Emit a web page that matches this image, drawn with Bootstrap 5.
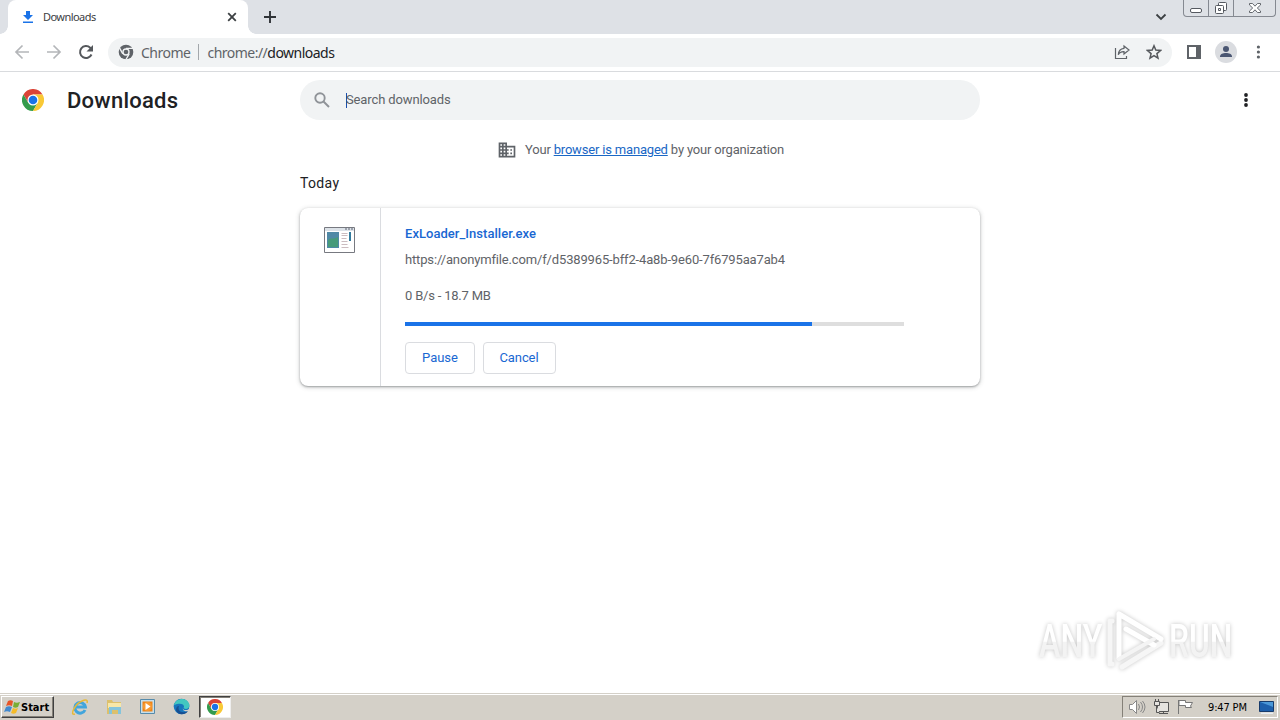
<!DOCTYPE html>
<html lang="en">
<head>
    <meta charset="UTF-8">
    <meta name="viewport" content="width=device-width, initial-scale=1.0">
    <title>Downloads</title>
    <link rel="stylesheet" href="https://cdn.jsdelivr.net/npm/bootstrap@5.3.0/dist/css/bootstrap.min.css">

    <style>
        body {
            height: 720px;
            overflow: hidden;
            font-family: Roboto, "Liberation Sans", sans-serif;
            font-size: 13px;
            line-height: 20px;
            color: #5f6368;
        }
        svg { display: block; flex: none; }

        /* tab strip */
        .tab-strip { height: 34px; background: #dee1e6; padding-left: 8px; }
        .browser-tab {
            width: 240px;
            height: 34px;
            padding: 0 10px 0 14px;
            background: #fff;
            border-radius: 8px 8px 0 0;
            color: #3c4043;
            font: 11px/34px "Noto Sans", sans-serif;
        }
        .browser-tab::before, .browser-tab::after {
            content: "";
            position: absolute;
            bottom: 0;
            width: 8px;
            height: 8px;
        }
        .browser-tab::before { left: -8px; background: radial-gradient(circle at 0 0, #dee1e6 7.5px, #fff 8px); }
        .browser-tab::after { right: -8px; background: radial-gradient(circle at 100% 0, #dee1e6 7.5px, #fff 8px); }
        .tab-title { margin-left: 9px; letter-spacing: -.55px; }
        .window-buttons {
            width: 93px;
            height: 17px;
            margin-right: 4px;
            border: 1px solid #858991;
            border-top: 0;
            border-radius: 0 0 4px 4px;
        }

        /* toolbar */
        .toolbar { height: 38px; border-bottom: 1px solid #d9dbde; padding: 0 14px 1px; }
        .omnibox {
            width: 1064px;
            height: 29px;
            margin-left: 14px;
            padding: 0 10px;
            background: #f1f3f4;
            border-radius: 15px;
            font: 14px/29px "Noto Sans", sans-serif;
        }
        .origin-chip { margin-left: 7px; letter-spacing: -.5px; }
        .chip-line { width: 1px; height: 16px; margin: 0 8px 0 8px; background: #a3a7ab; }
        .address { letter-spacing: -.52px; }
        .address b { font-weight: 400; color: #202124; }
        .profile { margin: 0 17px 0 14px; }

        /* downloads page */
        .page { height: 621px; }
        .page-header { height: 56px; padding-left: 22px; }
        .page-title { width: 256px; padding: 1px 0 0 23px; margin: 0; font-size: 22px; font-weight: 500; line-height: 28px; color: #202124; letter-spacing: .25px; }
        .search-box { width: 680px; height: 40px; padding-left: 12px; background: #f1f3f4; border-radius: 20px; letter-spacing: -.12px; }
        .caret { width: 1px; height: 15px; margin: 0 -1px 0 14px; background: #1a4fae; }
        .managed { height: 44px; padding: 0 0 1px 1px; letter-spacing: -.18px; }
        .managed a { color: #1967c5; }
        .more-menu { margin: 0 26px 0 auto; }
        .downloads-list { width: 680px; }
        .date-label { height: 36px; font-size: 14px; line-height: 22px; color: #202124; letter-spacing: .35px; }
        .download-item {
            height: 178px;
            border-radius: 8px;
            box-shadow: 0 1px 2px rgba(60, 64, 67, .4), 0 1px 4px 1px rgba(60, 64, 67, .18);
        }
        .file-icon { width: 81px; border-right: 1px solid #dadce0; padding: 19px 0 0 24px; }
        .file-info { width: 523px; padding: 16px 0 0 24px; }
        .file-name { color: #1967d2; font-weight: 500; letter-spacing: .04px; }
        .file-url { margin-top: 6px; letter-spacing: -.15px; }
        .file-speed { margin-top: 16px; letter-spacing: -.2px; }
        .progress-track { height: 4px; margin-top: 16px; background: #dedede; }
        .progress-track div { height: 4px; background: #1a73e8; }
        .action-btn {
            height: 32px;
            padding: 0 16px 1px;
            border: 1px solid #dadce0;
            border-radius: 4px;
            color: #1967d2;
            font-size: 13px;
            line-height: 29px;
        }
        .cancel-btn { width: 73px; padding-left: 15px; padding-right: 16px; letter-spacing: -.1px; }
        .watermark { position: absolute; right: 35px; bottom: 12px; filter: drop-shadow(0 0 2px rgba(0, 0, 0, .23)); }

        /* taskbar */
        .taskbar { height: 27px; background: #d4d0c8; border-top: 1px solid #d4d0c8; box-shadow: inset 0 1px #fff; color: #000; }
        .start-btn {
            width: 53px;
            height: 22px;
            margin: 2px 0 0 1px;
            padding: 1px 0 0 2px;
            border: 1px solid;
            border-color: #fff #404040 #404040 #fff;
            box-shadow: inset -1px -1px #848078;
            font: bold 11px/19px "DejaVu Sans Condensed", "DejaVu Sans", sans-serif;
        }
        .task-icons { padding: 4px 0 0 17px; gap: 17px; }
        .task-active {
            width: 32px;
            height: 22px;
            margin: 2px 0 0 9px;
            background: #fff;
            border: 1px solid;
            border-color: #404040 #eee #eee #404040;
            box-shadow: inset 1px 1px #848078;
        }
        .tray {
            width: 156px;
            height: 22px;
            margin: 2px 2px 0 0;
            padding: 0 0 0 5px;
            border: 1px solid;
            border-color: #848078 #fff #fff #848078;
        }
        .clock { margin: 1px 11px 0 14px; font: 11px/20px "DejaVu Sans Condensed", sans-serif; letter-spacing: -.15px; }
    </style>
</head>
<body class="d-flex flex-column bg-white">
    <!-- shared Chrome logo -->
    <svg width="0" height="0" class="position-absolute">
        <symbol id="chrome-logo" viewBox="0 0 48 48">
            <path fill="#db4437" d="M24 12h20.800A24 24 0 0 0 3.200 12l10.400 18z"/>
            <path fill="#349b4c" d="M13.600 30 3.200 12A24 24 0 0 0 24 48l10.400-18z"/>
            <path fill="#f9c936" d="M34.400 30 24 48a24 24 0 0 0 20.800-36H24z"/>
            <circle cx="24" cy="24" r="12" fill="#fff"/>
            <circle cx="24" cy="24" r="9.400" fill="#1a73e8"/>
        </symbol>
    </svg>

    <div class="tab-strip d-flex">
        <div class="browser-tab d-flex align-items-center position-relative">
            <svg width="12" height="12" viewBox="0 0 12 12" fill="#1a73e8"><path d="M4 0h4v4h3L6 9 1 4h3zM1 10.500h10V12H1z"/></svg>
            <span class="tab-title">Downloads</span>
            <svg class="ms-auto" width="12" height="12" viewBox="0 0 12 12" stroke="#3c4043" stroke-width="1.800"><path d="m2.200 2.200 7.600 7.600m0-7.600L2.200 9.800"/></svg>
        </div>
        <svg class="align-self-center ms-3" width="12" height="12" viewBox="0 0 12 12" stroke="#303338" stroke-width="1.900"><path d="M6 0v12M0 6h12"/></svg>
        <svg class="align-self-center ms-auto me-3" width="12" height="12" viewBox="0 0 12 12" fill="none" stroke="#3c4043" stroke-width="1.800"><path d="m1.500 3.500 4.500 4.500 4.500-4.500"/></svg>
        <div class="window-buttons">
            <svg width="91" height="16" viewBox="0 0 91 16" fill="none" stroke="#555960">
                <path stroke="#858991" d="M24.500 0v16M49.500 0v16"/>
                <rect x="6.500" y="8.500" width="11" height="4" rx="1.500" fill="#fff"/>
                <rect x="34.500" y="2.500" width="8" height="8" rx="1" fill="#fff"/>
                <rect x="31.500" y="5.500" width="8" height="8" rx="1" fill="#fff"/><path d="M34.500 8.500h2v2h-2z"/>
                <path fill="#fff" stroke-width=".9" d="M65.500 3.500h3l2.500 2.700 2.500-2.700h3V5L73.300 8l3.200 3v1.500h-3L71 9.800l-2.500 2.700h-3V11l3.200-3-3.200-3z"/>
            </svg>
        </div>
    </div>

    <div class="toolbar d-flex align-items-center">
        <svg width="16" height="16" viewBox="0 0 16 16" fill="none" stroke="#b4b6b9" stroke-width="1.700"><path d="M15 8H2m6.500-6.500L2 8l6.500 6.500"/></svg>
        <svg class="ms-3" width="16" height="16" viewBox="0 0 16 16" fill="none" stroke="#b4b6b9" stroke-width="1.700"><path d="M1 8h13M7.500 1.500 14 8l-6.500 6.500"/></svg>
        <svg class="ms-3" width="16" height="16" viewBox="0 0 16 16" fill="none" stroke="#55585c" stroke-width="2"><path d="M13.500 10.500A6 6 0 1 1 12.200 3.700L14 5.500"/><path fill="#55585c" stroke="none" d="M15 1v6.500H8.500z"/></svg>
        <div class="omnibox d-flex align-items-center">
            <svg width="16" height="16" viewBox="0 0 48 48">
                <circle cx="24" cy="24" r="22" fill="#5f6368"/>
                <path fill="none" stroke="#f1f3f4" stroke-width="4" d="M24 13h21M14.500 29.500 4 11M33.500 29.500 23 48"/>
                <circle cx="24" cy="24" r="9" fill="#5f6368" stroke="#f1f3f4" stroke-width="4"/>
            </svg>
            <span class="origin-chip">Chrome</span>
            <span class="chip-line"></span>
            <span class="address">chrome://<b>downloads</b></span>
            <svg class="ms-auto" width="16" height="16" viewBox="0 0 16 16" fill="none" stroke="#5f6368" stroke-width="1.200"><path d="M1.500 4v10.500h11V12M10 2l5 4-5 4V7.600C7 7.500 5.300 8.600 4.300 10.800 4.500 7 6.500 4.600 10 4.300z"/></svg>
            <svg class="ms-3" width="16" height="16" viewBox="0 0 16 16" fill="none" stroke="#55585c" stroke-width="1.500"><path d="m8 1.800 1.800 4.300 4.700.4-3.600 3.100 1.100 4.600L8 11.700l-4 2.500 1.100-4.600-3.600-3.100 4.700-.4z"/></svg>
        </div>
        <svg class="ms-auto" width="14" height="14" viewBox="0 0 14 14"><path fill="#5f6368" d="M0 0h14v14H0z"/><path fill="#fff" d="M2 2h7v10H2z"/></svg>
        <svg class="profile" width="22" height="22" viewBox="0 0 22 22"><circle cx="11" cy="11" r="11" fill="#dadce0"/><circle cx="11" cy="8" r="3" fill="#4a5672"/><path fill="#4a5672" d="M5 16v-.5c0-2.500 3-3.500 6-3.500s6 1 6 3.500v.5z"/></svg>
        <svg width="12" height="16" viewBox="0 0 12 16" fill="#5f6368"><circle cx="4.400" cy="3" r="1.600"/><circle cx="4.400" cy="8" r="1.600"/><circle cx="4.400" cy="13" r="1.600"/></svg>
    </div>

    <main class="page position-relative">
        <header class="page-header d-flex align-items-center">
            <svg width="22" height="22"><use href="#chrome-logo"/></svg>
            <h1 class="page-title">Downloads</h1>
            <div class="search-box d-flex align-items-center">
                <svg width="20" height="20" viewBox="0 0 20 20" fill="none" stroke="#8f9398" stroke-width="1.900"><circle cx="8" cy="8" r="4.700"/><path d="m11.500 11.500 5.500 5.500"/></svg>
                <span class="caret"></span>
                <span>Search downloads</span>
            </div>
            <svg class="more-menu" width="16" height="16" viewBox="0 0 16 16" fill="#202124"><circle cx="8" cy="3" r="1.900"/><circle cx="8" cy="8" r="1.900"/><circle cx="8" cy="13" r="1.900"/></svg>
        </header>

        <div class="managed d-flex align-items-center justify-content-center">
            <svg class="me-2" width="20" height="20" viewBox="0 0 24 24" fill="#5f6368"><path d="M12 7V3H2v18h20V7H12zM6 19H4v-2h2v2zm0-4H4v-2h2v2zm0-4H4V9h2v2zm0-4H4V5h2v2zm4 12H8v-2h2v2zm0-4H8v-2h2v2zm0-4H8V9h2v2zm0-4H8V5h2v2zm10 12h-8v-2h2v-2h-2v-2h2v-2h-2V9h8v10zm-2-8h-2v2h2v-2zm0 4h-2v2h2v-2z"/></svg>
            <span>Your <a href="#">browser is managed</a> by your organization</span>
        </div>

        <section class="downloads-list mx-auto">
            <div class="date-label">Today</div>
            <article class="download-item d-flex">
                <div class="file-icon">
                    <svg width="31" height="26" viewBox="0 0 31 26">
                        <path fill="#fff" stroke="#777980" d="M.5.5h30v25H.5z"/>
                        <path fill="#dce2e8" d="M1 1h29v3H1z"/>
                        <path fill="#5b6170" d="M21 1.500h2v1h-2zm3 0h2v1h-2zm3 0h2v1h-2z"/>
                        <path fill="#5089a6" d="M3 5h12v16H3z"/>
                        <path fill="#479b7a" d="M4 13c3-3 5 0 10-3v10H4z"/>
                        <path stroke="#cbbcc0" d="M17.500 6.500h6m-6 2h6m-6 3h5m-5 3h6m-6 3h6m-6 3h7"/>
                        <path fill="#327b9e" d="M25 5h2v9h-2z"/>
                    </svg>
                </div>
                <div class="file-info">
                    <div class="file-name">ExLoader_Installer.exe</div>
                    <div class="file-url">https://anonymfile.com/f/d5389965-bff2-4a8b-9e60-7f6795aa7ab4</div>
                    <div class="file-speed">0 B/s - 18.7 MB</div>
                    <div class="progress-track"><div style="width: 81.6%"></div></div>
                    <div class="d-flex gap-2 mt-3">
                        <button class="action-btn bg-white">Pause</button>
                        <button class="action-btn cancel-btn bg-white">Cancel</button>
                    </div>
                </div>
            </article>
        </section>

        <svg class="watermark" width="212" height="74" viewBox="0 0 212 74">
            <defs>
                <linearGradient id="fade" x2="0" y2="1"><stop offset=".5" stop-color="#fff"/><stop offset=".52" stop-color="#f3f3f3"/></linearGradient>
            </defs>
            <!-- lettering is squeezed to about two thirds of its width -->
            <g fill="url(#fade)" font-family="Roboto" font-size="47" font-weight="500" transform="scale(.68 1)">
                <text x="9" y="50" textLength="93" lengthAdjust="spacingAndGlyphs">ANY</text>
                <text x="200" y="50" textLength="93" lengthAdjust="spacingAndGlyphs">RUN</text>
            </g>
            <g fill="none" stroke="#fff" stroke-width="5" stroke-linejoin="round" stroke-linecap="round">
                <path stroke="#f6f6f6" d="M79 14h-2v43h2M89 60l39-24"/>
                <path d="M86 7v44M86 7l42 25M93 22l28 16"/>
                <path stroke="#f4f4f4" stroke-width="4" d="m86 52 35-20"/>
            </g>
        </svg>
    </main>

    <footer class="taskbar d-flex">
        <div class="start-btn d-flex align-items-center">
            <svg width="17" height="17" viewBox="0 0 17 17"><path fill="#e75427" d="M4 2c2-1 3-1 5 0L8 7C6 6 4 6 2 7z"/><path fill="#79ad35" d="M10 3c2 1 3 1 6 0l-2 5c-2 1-3 1-5 0z"/><path fill="#4189cf" d="M2 8c2-1 4-1 6 0l-2 5c-2-1-4-1-6 0z"/><path fill="#f5bb28" d="M9 9c2 1 3 1 5 0l-2 5c-2 1-3 1-5 0z"/></svg>
            <span>Start</span>
        </div>
        <div class="task-icons d-flex">
            <svg width="18" height="18" viewBox="0 0 18 18" fill="none"><path stroke="#42a5dc" stroke-width="3" d="M14 12a5.300 5.300 0 1 1 .4-3H5"/><path stroke="#e7b938" stroke-width="1.500" d="M4 16c-6 2 0-10 7-13 4-2 6-1 5 2"/></svg>
            <svg width="17" height="18" viewBox="0 0 17 18"><path fill="#dcc06c" d="M1 2h5l1 2h8v12H1z"/><path fill="#f7e7a8" d="M2 5h13v5H2z"/><path fill="#84c4dc" d="M3 9h12v7h-3v-4H6v4H3z"/></svg>
            <svg width="16" height="18" viewBox="0 0 16 18"><path fill="#c6dfec" stroke="#568bab" d="M.5 1.500h14v14H.5z"/><path fill="#ef8317" d="M2.500 3.500h10v10h-10z"/><circle cx="7.500" cy="8.500" r="4.500" fill="#f69a32"/><path fill="#fff" d="m5.500 5 5 3.500-5 3.500z"/></svg>
            <svg width="17" height="18" viewBox="0 0 17 18"><circle cx="8.500" cy="8.500" r="7.800" fill="#1676bd"/><path fill="#43c7c0" d="M1 7C3-1 15-1 16.500 7c0 4-4 5-6 3 2-3-2-6-9.500-3z"/><path fill="#174f91" d="M6 8c-2 5 3 8 9 5-3 5-11 4-12-1 0-2 1-4 3-4z"/><path fill="#d4d0c8" d="M10 9.500c-1 3 4 3.500 7 1V13c-4 1-8 0-7-3.500z"/></svg>
        </div>
        <div class="task-active d-flex align-items-center justify-content-center"><svg width="16" height="16"><use href="#chrome-logo"/></svg></div>
        <div class="tray d-flex align-items-center ms-auto">
            <svg width="18" height="16" viewBox="0 0 18 16" fill="none" stroke="#888"><path fill="#fff" d="M1.500 5.500h3l4-4v13l-4-4h-3z"/><path d="M10.500 5q2 3 0 6M12.500 3q4 5 0 10M14.500 2q5 6 0 12"/></svg>
            <svg class="ms-2" width="16" height="16" viewBox="1 0 16 16" fill="#e5e3df" stroke="#555"><path d="M4.500 3.500h11v9h-11zM6 14.500h9M10.500 12.500v2"/><path d="M1.500 2.500h5v4h-5zM2.500 0v3m3-3v3M3.500 7v6.500h3"/></svg>
            <svg class="ms-2" width="16" height="16" viewBox="0 0 16 16" fill="#fff" stroke="#777"><path d="M.5 1v14M1 1.500h6.500v2h7l-2 3.500 1 1.500h-6v-2H1z"/></svg>
            <span class="clock text-nowrap">9:47 PM</span>
            <svg width="17" height="16" viewBox="0 0 17 16"><path fill="#1d5fab" stroke="#173b6b" d="M1.500 2.500h14v10h-14z"/><path fill="#4b98d8" d="m2 3 13 5V3z"/><path fill="#e7edf2" d="M3 13.500h12v1.500H3z"/></svg>
        </div>
    </footer>

    <script src="https://cdn.jsdelivr.net/npm/bootstrap@5.3.0/dist/js/bootstrap.bundle.min.js"></script>
</body>
</html>
